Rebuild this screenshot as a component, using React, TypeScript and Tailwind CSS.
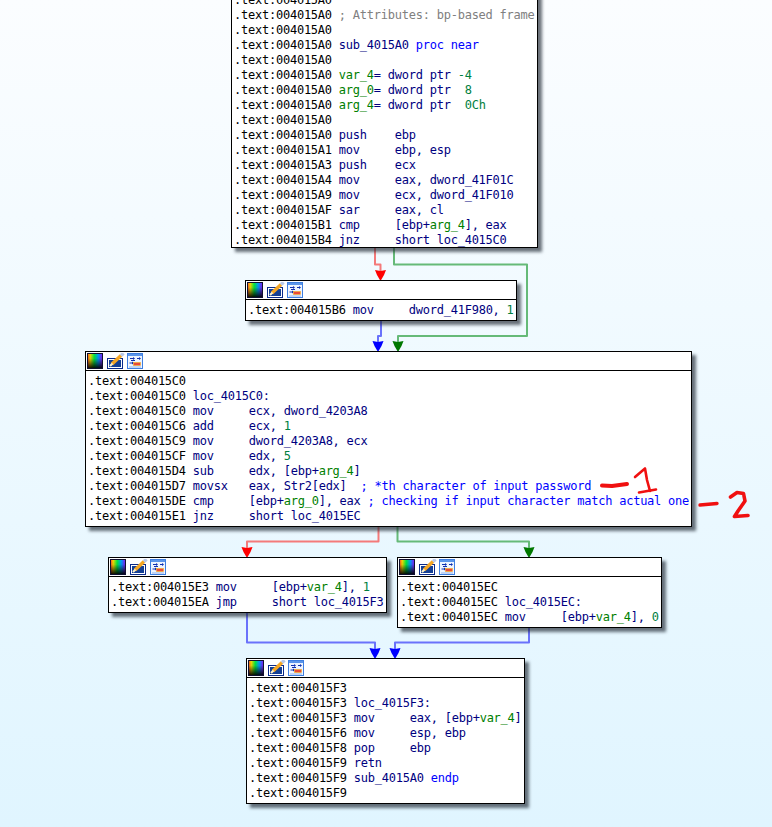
import React, { useId } from 'react';

type Seg = [string, string];

const ADDR = 'text-[#000000]';
const NAVY = 'text-[#000080]';
const BLUE = 'text-[#0000ff]';
const GRN = 'text-[#008000]';
const NUM = 'text-[#008040]';
const GRAY = 'text-[#808080]';

const asm = (addr: string, ...rest: Seg[]): Seg[] => [[`.text:${addr}`, ADDR], ...(rest.length ? ([[' ', ADDR]] as Seg[]) : []), ...rest];

const PaletteIcon = () => {
  const id = useId();
  return (
    <svg width="16" height="16" viewBox="0 0 16 16" className="block shrink-0">
      <defs>
        <linearGradient id={`${id}h`} x1="0" x2="1" y1="0" y2="0">
          <stop offset="0" stopColor="#ff3030" />
          <stop offset="0.2" stopColor="#ffe000" />
          <stop offset="0.45" stopColor="#00f040" />
          <stop offset="0.7" stopColor="#00a0ff" />
          <stop offset="1" stopColor="#a000ff" />
        </linearGradient>
        <linearGradient id={`${id}v`} x1="0" x2="0" y1="0" y2="1">
          <stop offset="0" stopColor="#000" stopOpacity="0" />
          <stop offset="0.35" stopColor="#000" stopOpacity="0.1" />
          <stop offset="1" stopColor="#000" stopOpacity="1" />
        </linearGradient>
      </defs>
      <rect width="16" height="16" fill={`url(#${id}h)`} />
      <rect width="16" height="16" fill={`url(#${id}v)`} />
      <rect x="0.5" y="0.5" width="15" height="15" fill="none" stroke="#101030" />
    </svg>
  );
};

const PencilIcon = () => (
  <svg width="18" height="16" viewBox="0 0 18 16" className="block shrink-0 ml-[4px]">
    <rect x="0.5" y="5.5" width="15" height="10" fill="#fff" stroke="#0a2a8a" />
    <rect x="2" y="7" width="12" height="7" fill="#143f94" />
    <path d="M5 11 L14 2.5" stroke="#f5a623" strokeWidth="3.4" />
    <path d="M14 2.5 L16.5 0.2" stroke="#b8c8e8" strokeWidth="3.4" />
    <path d="M3 13 L5.5 10.5" stroke="#fff0c8" strokeWidth="2.2" />
  </svg>
);

const GraphIcon = () => (
  <svg width="16" height="16" viewBox="0 0 16 16" className="block shrink-0 ml-[2px]">
    <rect x="0.5" y="0.5" width="15" height="15" fill="#eef5ff" stroke="#3f7fe0" />
    <rect x="1" y="1" width="14" height="2" fill="#5b95ea" />
    <path d="M3 5.5 H6 M4 7.5 H8 M10 5.5 H13 M2.5 10 H6" stroke="#1030b0" strokeWidth="1" />
    <path d="M6 4 L8 5.5 L6 7 Z M12 4 L14 5.5 L12 7 Z M5 8.5 L7 10 L5 11.5 Z" fill="#1030b0" />
    <rect x="6.5" y="9.5" width="7" height="3" fill="#e84a3a" stroke="#f0b020" strokeWidth="0.6" />
    <path d="M2 14 H14" stroke="#8fb4ee" />
  </svg>
);

const Node: React.FC<{ className: string; header?: boolean; lines: Seg[][] }> = ({ className, header = true, lines }) => (
  <div className={`absolute bg-white border border-black shadow-[4px_4px_3px_rgba(30,40,50,0.65)] ${className}`}>
    {header && (
      <div className="h-[18px] border-b border-black box-content flex items-center pl-[1px]">
        <PaletteIcon />
        <PencilIcon />
        <GraphIcon />
      </div>
    )}
    <div className="pt-[3px] pl-[2px] font-['DejaVu_Sans_Mono',monospace] text-[12px] tracking-[-0.236px] leading-[15px] whitespace-pre">
      {lines.map((line, i) => (
        <div key={i} className="h-[15px]">
          {line.map(([t, c], j) => (
            <span key={j} className={c}>{t}</span>
          ))}
        </div>
      ))}
    </div>
  </div>
);

const NODE_TOP: Seg[][] = [
  asm('004015A0'),
  asm('004015A0', ['; Attributes: bp-based frame', GRAY]),
  asm('004015A0'),
  asm('004015A0', ['sub_4015A0 ', NAVY], ['proc near', BLUE]),
  asm('004015A0'),
  asm('004015A0', ['var_4', GRN], ['= dword ptr ', NAVY], ['-4', NUM]),
  asm('004015A0', ['arg_0', GRN], ['= dword ptr  ', NAVY], ['8', NUM]),
  asm('004015A0', ['arg_4', GRN], ['= dword ptr  ', NAVY], ['0Ch', NUM]),
  asm('004015A0'),
  asm('004015A0', ['push    ebp', NAVY]),
  asm('004015A1', ['mov     ebp, esp', NAVY]),
  asm('004015A3', ['push    ecx', NAVY]),
  asm('004015A4', ['mov     eax, dword_41F01C', NAVY]),
  asm('004015A9', ['mov     ecx, dword_41F010', NAVY]),
  asm('004015AF', ['sar     eax, cl', NAVY]),
  asm('004015B1', ['cmp     [ebp+', NAVY], ['arg_4', GRN], ['], eax', NAVY]),
  asm('004015B4', ['jnz     short loc_4015C0', NAVY]),
];

const NODE_SET: Seg[][] = [asm('004015B6', ['mov     dword_41F980, ', NAVY], ['1', NUM])];

const NODE_CHECK: Seg[][] = [
  asm('004015C0'),
  asm('004015C0', ['loc_4015C0:', NAVY]),
  asm('004015C0', ['mov     ecx, dword_4203A8', NAVY]),
  asm('004015C6', ['add     ecx, ', NAVY], ['1', NUM]),
  asm('004015C9', ['mov     dword_4203A8, ecx', NAVY]),
  asm('004015CF', ['mov     edx, ', NAVY], ['5', NUM]),
  asm('004015D4', ['sub     edx, [ebp+', NAVY], ['arg_4', GRN], [']', NAVY]),
  asm('004015D7', ['movsx   eax, Str2[edx]  ', NAVY], ['; *th character of input password', BLUE]),
  asm('004015DE', ['cmp     [ebp+', NAVY], ['arg_0', GRN], ['], eax ', NAVY], ['; checking if input character match actual one', BLUE]),
  asm('004015E1', ['jnz     short loc_4015EC', NAVY]),
];

const NODE_ONE: Seg[][] = [
  asm('004015E3', ['mov     [ebp+', NAVY], ['var_4', GRN], ['], ', NAVY], ['1', NUM]),
  asm('004015EA', ['jmp     short loc_4015F3', NAVY]),
];

const NODE_ZERO: Seg[][] = [
  asm('004015EC'),
  asm('004015EC', ['loc_4015EC:', NAVY]),
  asm('004015EC', ['mov     [ebp+', NAVY], ['var_4', GRN], ['], ', NAVY], ['0', NUM]),
];

const NODE_END: Seg[][] = [
  asm('004015F3'),
  asm('004015F3', ['loc_4015F3:', NAVY]),
  asm('004015F3', ['mov     eax, [ebp+', NAVY], ['var_4', GRN], [']', NAVY]),
  asm('004015F6', ['mov     esp, ebp', NAVY]),
  asm('004015F8', ['pop     ebp', NAVY]),
  asm('004015F9', ['retn', NAVY]),
  asm('004015F9', ['sub_4015A0 ', NAVY], ['endp', BLUE]),
  asm('004015F9'),
];

// edge of the flow graph: pale line, solid arrow head
const Edge = ({ d, x, y, line, head }: { d: string; x: number; y: number; line: string; head: string }) => (
  <g>
    <path d={d} fill="none" stroke={line} strokeWidth="2" strokeLinejoin="round" />
    <path d={`M${x - 5.5} ${y - 11} L${x} ${y - 10} L${x + 5.5} ${y - 11} L${x + 3.5} ${y - 6} L${x} ${y} L${x - 3.5} ${y - 6} Z`} fill={head} />
  </g>
);

const RED = '#f47a7a';
const GREEN = '#66ba78';
const BLUEL = '#6a72fb';

const App: React.FC = () => {
  return (
    <div className="relative w-[772px] h-[827px] overflow-hidden bg-gradient-to-b from-[#fbfdff] to-[#e0f5ff]">
      <svg width="772" height="827" className="absolute inset-0">
        <Edge d="M375 248 V264.5 H380.5 V272" x={380.5} y={281} line={RED} head="#ff0000" />
        <Edge d="M394 248 V264.5 H527 V336 H398 V342" x={398} y={352} line={GREEN} head="#007800" />
        <Edge d="M381 320 V336 H378 V342" x={378} y={352} line={BLUEL} head="#0000ff" />
        <Edge d="M378.5 526 V541.5 H247 V548" x={247} y={558} line={RED} head="#ff0000" />
        <Edge d="M397.5 526 V541.5 H529 V548" x={529} y={558} line={GREEN} head="#007800" />
        <Edge d="M247 612 V642.5 H375 V649" x={375} y={659} line={BLUEL} head="#0000ff" />
        <Edge d="M529 627 V642.5 H395 V649" x={395} y={659} line={BLUEL} head="#0000ff" />
      </svg>

      <Node className="left-[231px] top-[-11px] w-[307px] h-[259px]" header={false} lines={NODE_TOP} />
      <Node className="left-[245px] top-[280px] w-[272px] h-[41px]" lines={NODE_SET} />
      <Node className="left-[85px] top-[351px] w-[607px] h-[176px]" lines={NODE_CHECK} />
      <Node className="left-[108px] top-[557px] w-[279px] h-[56px]" lines={NODE_ONE} />
      <Node className="left-[397px] top-[557px] w-[265px] h-[71px]" lines={NODE_ZERO} />
      <Node className="left-[246px] top-[658px] w-[279px] h-[146px]" lines={NODE_END} />

      {/* marker scribbles added on the screenshot */}
      <svg width="772" height="827" className="absolute inset-0 pointer-events-none">
        <g fill="none" stroke="#f01010" strokeLinecap="round" strokeLinejoin="round">
          <path d="M602 485.5 L612 486 L627 484" strokeWidth="4" />
          <path d="M635 477 L645 468.5 L647 480 L650 491" strokeWidth="2.6" />
          <path d="M639 492.5 L656 489.5" strokeWidth="2.6" />
          <path d="M700 505 L717 503.5" strokeWidth="3.4" />
          <path d="M730.5 497 L737 492.5 L743.5 493.5 L745 501 L738 511 L734.5 516.5 L748 515.5" strokeWidth="3.6" />
        </g>
      </svg>
    </div>
  );
};

export default App;
